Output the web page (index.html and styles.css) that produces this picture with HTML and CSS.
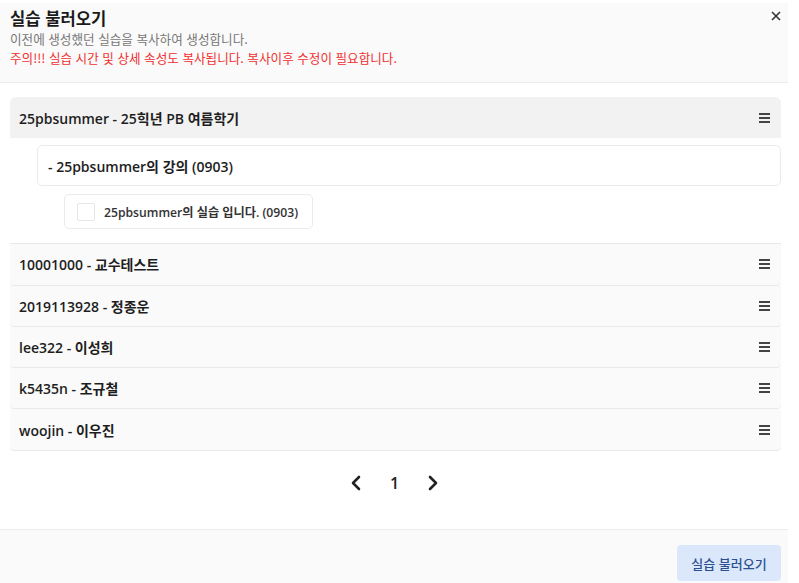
FILE: index.html
```html
<!DOCTYPE html>
<html lang="ko">
<head>
<meta charset="utf-8">
<link rel="stylesheet" href="styles.css">
</head>
<body>
<div class="modal">
  <div class="header">
    <div class="title">실습 불러오기</div>
    <div class="desc">이전에 생성했던 실습을 복사하여 생성합니다.</div>
    <div class="warn">주의!!! 실습 시간 및 상세 속성도 복사됩니다. 복사이후 수정이 필요합니다.</div>
    <button class="close" aria-label="close">
      <svg width="10" height="10" viewBox="0 0 10 10"><path d="M1 1L9 9M9 1L1 9" stroke="#333" stroke-width="1.6" fill="none"/></svg>
    </button>
  </div>
  <div class="body">
    <div class="list">
      <div class="group open">
        <div class="row active">
          <span class="label">25pbsummer - 25힉년 PB 여름학기</span>
          <span class="menu"><i></i><i></i><i></i></span>
        </div>
        <div class="children">
          <div class="sub">- 25pbsummer의 강의 (0903)</div>
          <label class="lab"><span class="box"></span><span>25pbsummer의 실습 입니다. (0903)</span></label>
        </div>
      </div>
      <div class="row"><span class="label">10001000 - 교수테스트</span><span class="menu"><i></i><i></i><i></i></span></div>
      <div class="row"><span class="label">2019113928 - 정종운</span><span class="menu"><i></i><i></i><i></i></span></div>
      <div class="row"><span class="label">lee322 - 이성희</span><span class="menu"><i></i><i></i><i></i></span></div>
      <div class="row"><span class="label">k5435n - 조규철</span><span class="menu"><i></i><i></i><i></i></span></div>
      <div class="row"><span class="label">woojin - 이우진</span><span class="menu"><i></i><i></i><i></i></span></div>
    </div>
    <div class="pager">
      <svg width="12" height="16" viewBox="0 0 12 16"><path d="M9 2L3 8L9 14" stroke="#222" stroke-width="2.6" fill="none" stroke-linecap="round" stroke-linejoin="round"/></svg>
      <span class="page">1</span>
      <svg width="12" height="16" viewBox="0 0 12 16"><path d="M3 2L9 8L3 14" stroke="#222" stroke-width="2.6" fill="none" stroke-linecap="round" stroke-linejoin="round"/></svg>
    </div>
  </div>
  <div class="footer">
    <button class="primary">실습 불러오기</button>
  </div>
</div>
</body>
</html>
```
FILE: styles.css
```css
* { box-sizing: border-box; }
html, body { margin: 0; padding: 0; background: #fff; }
body {
  font-family: "Open Sans", "Noto Sans CJK KR", sans-serif;
  color: #222;
}
.modal {
  margin-top: 3px;
  width: 788px;
  height: 580px;
  display: flex;
  flex-direction: column;
  background: #fff;
}
.header {
  position: relative;
  background: #fafafa;
  border-bottom: 1px solid #ececec;
  padding: 4px 10px 0 10px;
  height: 80px;
}
.title {
  font-size: 16.6px;
  font-weight: 700;
  line-height: 22px;
  color: #1a1a1a;
  font-family: "Noto Sans CJK KR", sans-serif;
}
.desc {
  font-size: 12.6px;
  line-height: 18px;
  color: #777;
  margin-top: 1px;
  font-family: "Noto Sans CJK KR", sans-serif;
}
.warn {
  font-size: 12.6px;
  line-height: 18px;
  color: #f03030;
  margin-top: 1px;
  font-family: "Noto Sans CJK KR", sans-serif;
}
.close {
  position: absolute;
  right: 3px;
  top: 4px;
  width: 18px;
  height: 18px;
  border: 0;
  background: none;
  padding: 0;
  display: flex;
  align-items: center;
  justify-content: center;
}
.body {
  flex: 1;
  padding: 14px 7px 0 10px;
}
.list { display: flex; flex-direction: column; }
.row {
  height: 41.3px;
  display: flex;
  align-items: center;
  justify-content: space-between;
  padding: 0 11px 0 9px;
  background: #fafafa;
  border-bottom: 1px solid #e9e9e9;
  border-radius: 0 0 4px 4px;
}
.row.active {
  background: #f2f2f2;
  border-bottom: 0;
  border-radius: 6px 6px 0 0;
}
.label {
  font-size: 14px;
  font-weight: 600;
  color: #1e1e1e;
}
.menu {
  display: flex;
  flex-direction: column;
  gap: 2px;
  width: 11px;
}
.menu i {
  display: block;
  height: 2px;
  background: #444;
}
.children {
  padding: 7px 0 14px 27px;
  border-bottom: 1px solid #e9e9e9;
  display: flex;
  flex-direction: column;
  align-items: flex-start;
}
.sub {
  width: 100%;
  height: 41px;
  display: flex;
  align-items: center;
  padding: 0 10px;
  background: #fff;
  border: 1px solid #ebebeb;
  border-radius: 5px;
  font-size: 14px;
  font-weight: 600;
  color: #1e1e1e;
}
.lab {
  margin: 8px 0 0 27px;
  height: 35px;
  width: 249px;
  display: flex;
  align-items: center;
  gap: 9px;
  padding: 0 12px;
  border: 1px solid #ebebeb;
  border-radius: 5px;
  font-size: 12.2px;
  font-weight: 600;
  color: #333;
}
.box {
  width: 18px;
  height: 18px;
  border: 1px solid #e6e6e6;
  border-radius: 2px;
  background: #fff;
}
.pager {
  margin-top: 21px;
  display: flex;
  justify-content: center;
  align-items: center;
  gap: 28px;
  padding-right: 2px;
}
.page {
  font-size: 16px;
  font-weight: 600;
  color: #222;
}
.footer {
  height: 54px;
  background: #fafafa;
  border-top: 1px solid #ececec;
  display: flex;
  justify-content: flex-end;
  align-items: flex-end;
  padding: 0 7px 2px 0;
}
.primary {
  width: 104px;
  height: 36px;
  border: 0;
  border-radius: 4px;
  background: #dbe8fc;
  color: #2c4f8f;
  font-family: "Noto Sans CJK KR", sans-serif;
  font-size: 13px;
  font-weight: 500;
}
```
